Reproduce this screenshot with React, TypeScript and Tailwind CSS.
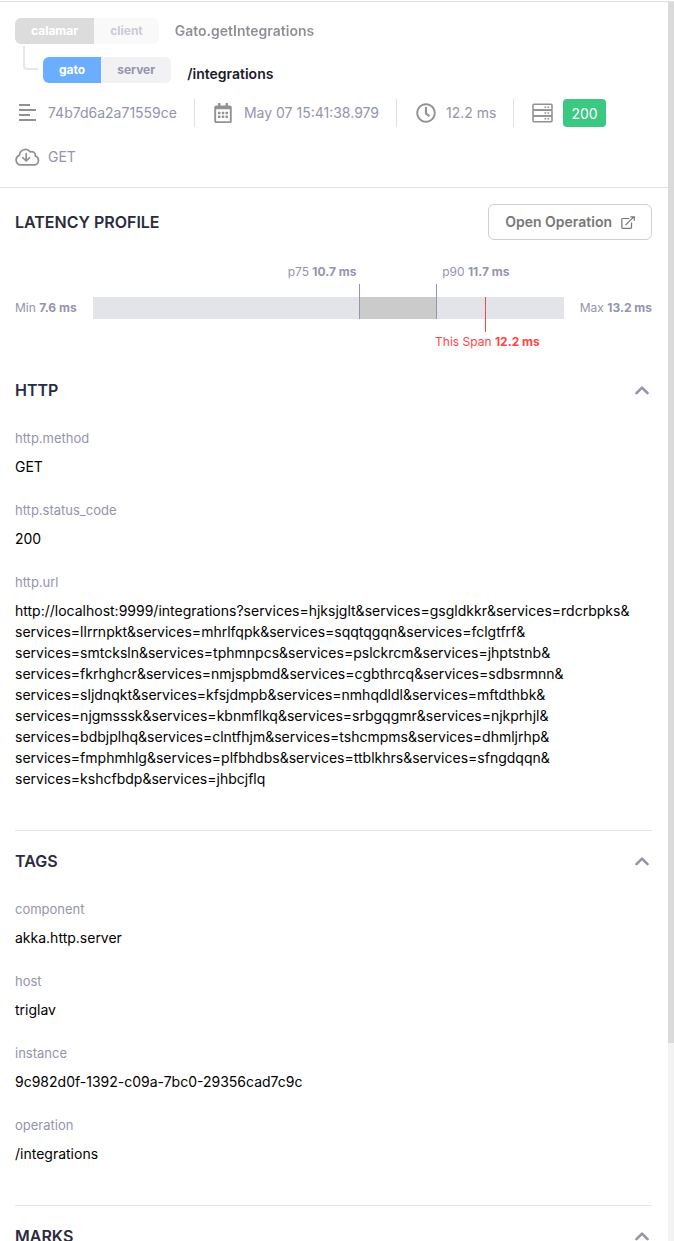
import { Fragment, useState, type ReactNode } from "react";
import { FaRegClock } from "react-icons/fa";

type Field = { name: string; value: string };

const httpFields: Field[] = [
  { name: "http.method", value: "GET" },
  { name: "http.status_code", value: "200" },
  {
    name: "http.url",
    value:
      "http://localhost:9999/integrations?services=hjksjglt&services=gsgldkkr&services=rdcrbpks&services=llrrnpkt&services=mhrlfqpk&services=sqqtqgqn&services=fclgtfrf&services=smtcksln&services=tphmnpcs&services=pslckrcm&services=jhptstnb&services=fkrhghcr&services=nmjspbmd&services=cgbthrcq&services=sdbsrmnn&services=sljdnqkt&services=kfsjdmpb&services=nmhqdldl&services=mftdthbk&services=njgmsssk&services=kbnmflkq&services=srbgqgmr&services=njkprhjl&services=bdbjplhq&services=clntfhjm&services=tshcmpms&services=dhmljrhp&services=fmphmhlg&services=plfbhdbs&services=ttblkhrs&services=sfngdqqn&services=kshcfbdp&services=jhbcjflq",
  },
];

const tagFields: Field[] = [
  { name: "component", value: "akka.http.server" },
  { name: "host", value: "triglav" },
  { name: "instance", value: "9c982d0f-1392-c09a-7bc0-29356cad7c9c" },
  { name: "operation", value: "/integrations" },
];

function LinesIcon() {
  return (
    <svg width="17" height="18" viewBox="0 0 17 18" fill="none" stroke="#929292" strokeWidth="2" aria-hidden="true">
      <path d="M0 1h11M0 6h17M0 11h11M0 16h17" />
    </svg>
  );
}

function CalendarIcon() {
  return (
    <svg width="18" height="20" viewBox="0 0 448 512" fill="#929292" aria-hidden="true">
      <path d="M148 288h-40c-6.600 0-12-5.400-12-12v-40c0-6.600 5.400-12 12-12h40c6.600 0 12 5.400 12 12v40c0 6.600-5.400 12-12 12zm108-12v-40c0-6.600-5.400-12-12-12h-40c-6.600 0-12 5.400-12 12v40c0 6.600 5.400 12 12 12h40c6.600 0 12-5.400 12-12zm96 0v-40c0-6.600-5.400-12-12-12h-40c-6.600 0-12 5.400-12 12v40c0 6.600 5.400 12 12 12h40c6.600 0 12-5.400 12-12zm-96 96v-40c0-6.600-5.400-12-12-12h-40c-6.600 0-12 5.400-12 12v40c0 6.600 5.400 12 12 12h40c6.600 0 12-5.400 12-12zm-96 0v-40c0-6.600-5.400-12-12-12h-40c-6.600 0-12 5.400-12 12v40c0 6.600 5.400 12 12 12h40c6.600 0 12-5.400 12-12zm192 0v-40c0-6.600-5.400-12-12-12h-40c-6.600 0-12 5.400-12 12v40c0 6.600 5.400 12 12 12h40c6.600 0 12-5.400 12-12zm96-260v352c0 26.500-21.500 48-48 48H48c-26.500 0-48-21.500-48-48V112c0-26.500 21.500-48 48-48h48V12c0-6.600 5.400-12 12-12h40c6.600 0 12 5.400 12 12v52h128V12c0-6.600 5.400-12 12-12h40c6.600 0 12 5.400 12 12v52h48c26.500 0 48 21.500 48 48zm-48 346V160H48v298c0 3.300 2.700 6 6 6h340c3.300 0 6-2.700 6-6z" />
    </svg>
  );
}

function ServerIcon() {
  return (
    <svg width="21" height="20" viewBox="0 0 21 20" fill="none" stroke="#929292" strokeWidth="1.600" aria-hidden="true">
      <rect x="1" y="1.300" width="19" height="5.800" rx="1" />
      <rect x="1" y="7.100" width="19" height="5.800" rx="1" />
      <rect x="1" y="12.900" width="19" height="5.800" rx="1" />
      <path d="M12.500 4.200h1.700M15.500 4.200h1.700M12.500 10h1.700M15.500 10h1.700M12.500 15.800h1.700M15.500 15.800h1.700" />
    </svg>
  );
}

function CloudIcon() {
  return (
    <svg
      width="25"
      height="18"
      viewBox="0 0 25 18"
      fill="none"
      stroke="#929292"
      strokeWidth="1.700"
      strokeLinecap="round"
      strokeLinejoin="round"
      aria-hidden="true"
    >
      <path d="M5.700 16.900A5 5 0 0 1 4.500 7.200 5.900 5.900 0 0 1 15.200 3.900 3.700 3.700 0 0 1 20.300 8 4.600 4.600 0 0 1 19.600 16.900Z" />
      <path d="M11.200 5.600v7.200M7.800 9.600l3.400 3.400 3.400-3.400" />
    </svg>
  );
}

function ExternalIcon() {
  return (
    <svg width="14" height="13" viewBox="0 0 14 13" fill="none" stroke="#777" strokeWidth="1.200" aria-hidden="true">
      <path d="M8.500 2.500H1.600a.8.800 0 0 0-.8.800v8.200c0 .4.400.8.800.8h8.100a.8.800 0 0 0 .8-.8V6.500" />
      <path d="M4.500 9.200 12.800.9M9.300.8h4v4" />
    </svg>
  );
}

function Chevron({ open }: { open: boolean }) {
  return (
    <svg
      width="14"
      height="9"
      viewBox="0 0 14 9"
      fill="none"
      stroke="#9494ad"
      strokeWidth="2.600"
      strokeLinecap="round"
      strokeLinejoin="round"
      className={open ? "" : "rotate-180"}
      aria-hidden="true"
    >
      <path d="M1.500 7.200 7 1.700l5.500 5.500" />
    </svg>
  );
}

function Info({ icon, divided = false, children }: { icon: ReactNode; divided?: boolean; children: ReactNode }) {
  return (
    <div className={`mr-4 flex h-7 items-center gap-2 ${divided ? "border-r border-[#e0e0e3] pr-[17px]" : ""}`}>
      <span className="flex w-[25px] justify-center">{icon}</span>
      <span className="leading-[30px]">{children}</span>
    </div>
  );
}

function Pill({ service, kind, active = false }: { service: string; kind: string; active?: boolean }) {
  return (
    <div className="flex h-[26px] overflow-hidden rounded-md text-xs leading-[26px] font-bold">
      <span className={`px-4 text-white ${active ? "bg-[#6baeff]" : "bg-[#b8b8b8]"}`}>{service}</span>
      <span className="bg-[#f2f2f5] px-4 text-[#9494ad]">{kind}</span>
    </div>
  );
}

function Section({ title, fields = [], divided = true }: { title: string; fields?: Field[]; divided?: boolean }) {
  const [open, setOpen] = useState(true);
  return (
    <section className={divided ? "border-t border-[#e3e3ea] pt-[18px]" : ""}>
      <button
        type="button"
        aria-expanded={open}
        onClick={() => setOpen(!open)}
        className="flex w-full items-center justify-between pr-[3px] text-base leading-6 font-semibold text-[#2b2b40]"
      >
        {title}
        <Chevron open={open} />
      </button>
      {open && (
        <dl className="flex flex-col gap-[23px] pt-[26px] pb-[41px]">
          {fields.map((field) => (
            <div key={field.name} className="flex flex-col gap-2">
              <dt className="text-[13px] leading-5 text-[#9494ad]">{field.name}</dt>
              <dd className="text-sm leading-[21px] text-black">
                {field.value.split("&").map((part, i) => (
                  <Fragment key={i}>
                    {i > 0 && (
                      <>
                        &amp;
                        <wbr />
                      </>
                    )}
                    {part}
                  </Fragment>
                ))}
              </dd>
            </div>
          ))}
        </dl>
      )}
    </section>
  );
}

function LatencyBar() {
  return (
    <div className="flex items-center gap-4 text-xs leading-[22px] whitespace-nowrap text-[#9494ad]">
      <span>
        Min <b>7.6 ms</b>
      </span>
      <div className="relative h-[22px] flex-1 bg-[#e3e4ea]">
        <div className="absolute inset-y-0 right-[27.2%] left-[56.5%] bg-[#cbcbcb]" />
        <div className="absolute -top-[13px] bottom-0 left-[56.5%] w-px bg-[#9494ad]" />
        <div className="absolute -top-[13px] bottom-0 left-[72.8%] w-px bg-[#9494ad]" />
        <div className="absolute top-0 -bottom-[13px] left-[83.2%] w-px bg-[#ff4545]" />
        <span className="absolute right-[44%] bottom-[36px]">
          p75 <b>10.7 ms</b>
        </span>
        <span className="absolute bottom-[36px] left-[74.2%]">
          p90 <b>11.7 ms</b>
        </span>
        <span className="absolute top-[34px] left-[83.8%] -translate-x-1/2 text-[#ff4545]">
          This Span <b>12.2 ms</b>
        </span>
      </div>
      <span>
        Max <b>13.2 ms</b>
      </span>
    </div>
  );
}

export default function App() {
  return (
    <div className="h-screen bg-white pt-px font-['Inter',sans-serif]">
      <div className="flex h-full border-t border-[#e3e3e3]">
        <main className="min-w-0 flex-1 overflow-hidden">
          <header className="border-b border-[#e3e3e3] px-[15px] py-4">
            <div className="flex items-center gap-4 opacity-50">
              <Pill service="calamar" kind="client" />
              <span className="text-sm leading-[26px] font-semibold text-[#1c1c2b]">Gato.getIntegrations</span>
            </div>
            <div className="mt-[13px] flex items-start">
              <span className="-mt-[11px] mr-[5px] ml-2 h-6 w-[15px] rounded-bl border-b-2 border-l-2 border-[#e8e8ea]" />
              <Pill service="gato" kind="server" active />
              <span className="ml-4 pt-2 text-sm leading-[18px] font-semibold text-[#1c1c2b]">/integrations</span>
            </div>
            <div className="mt-4 flex flex-wrap gap-y-4 text-sm text-[#9494ad]">
              <Info icon={<LinesIcon />} divided>
                74b7d6a2a71559ce
              </Info>
              <Info icon={<CalendarIcon />} divided>
                May 07 15:41:38.979
              </Info>
              <Info icon={<FaRegClock size={20} color="#929292" />} divided>
                12.2 ms
              </Info>
              <Info icon={<ServerIcon />}>
                <span className="block h-7 rounded bg-[#3bc882] px-2 text-white">200</span>
              </Info>
              <Info icon={<CloudIcon />}>GET</Info>
            </div>
          </header>

          <div className="pr-4 pl-[15px]">
            <section className="flex flex-col gap-[57px] pt-4 pb-[59px]">
              <div className="flex items-center justify-between">
                <h2 className="text-base font-semibold text-[#2b2b40]">LATENCY PROFILE</h2>
                <a
                  href="#operation"
                  className="flex h-9 items-center gap-[9px] rounded-md border border-[#cfcfd2] px-4 text-sm font-semibold text-[#777]"
                >
                  Open Operation
                  <ExternalIcon />
                </a>
              </div>
              <LatencyBar />
            </section>
            <Section title="HTTP" fields={httpFields} divided={false} />
            <Section title="TAGS" fields={tagFields} />
            <Section title="MARKS" />
          </div>
        </main>
        <div className="w-1.5 bg-[#f2f2f2]">
          <div className="h-[84%] bg-[#dadada]" />
        </div>
      </div>
    </div>
  );
}
